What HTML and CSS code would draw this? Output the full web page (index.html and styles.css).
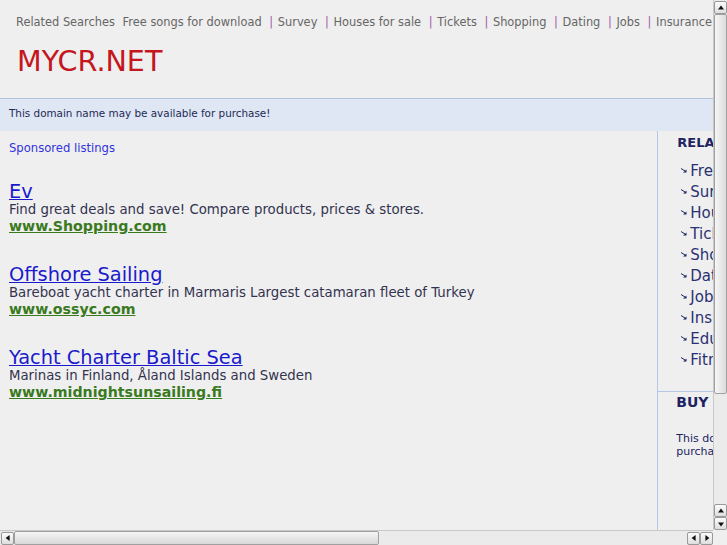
FILE: index.html
```html
<!DOCTYPE html>
<html>
<head>
<meta charset="utf-8">
<title>mycr.net</title>
<link rel="stylesheet" href="styles.css">
</head>
<body>
<div class="page">
  <div class="topnav">
    <span class="nav-label">Related Searches</span>
    <a href="#">Free songs for download</a> <span class="sep">|</span>
    <a href="#">Survey</a> <span class="sep">|</span>
    <a href="#">Houses for sale</a> <span class="sep">|</span>
    <a href="#">Tickets</a> <span class="sep">|</span>
    <a href="#">Shopping</a> <span class="sep">|</span>
    <a href="#">Dating</a> <span class="sep">|</span>
    <a href="#">Jobs</a> <span class="sep">|</span>
    <a href="#">Insurance</a> <span class="sep">|</span>
    <a href="#">Education</a> <span class="sep">|</span>
    <a href="#">Fitness</a>
  </div>
  <div class="logo">MYCR.NET</div>
  <div class="banner">This domain name may be available for purchase!</div>
  <div class="main">
    <div class="left">
      <div class="sponsored">Sponsored listings</div>
      <div class="ad">
        <a class="ad-title" href="#">Ev</a>
        <div class="ad-desc">Find great deals and save! Compare products, prices &amp; stores.</div>
        <a class="ad-url" href="#">www.Shopping.com</a>
      </div>
      <div class="ad">
        <a class="ad-title" href="#">Offshore Sailing</a>
        <div class="ad-desc">Bareboat yacht charter in Marmaris Largest catamaran fleet of Turkey</div>
        <a class="ad-url" href="#">www.ossyc.com</a>
      </div>
      <div class="ad">
        <a class="ad-title" href="#">Yacht Charter Baltic Sea</a>
        <div class="ad-desc">Marinas in Finland, Åland Islands and Sweden</div>
        <a class="ad-url" href="#">www.midnightsunsailing.fi</a>
      </div>
    </div>
    <div class="right">
      <div class="related">
        <div class="side-title">RELATED SEARCHES</div>
        <ul class="rel-list">
          <li><svg class="arr" width="6" height="5" viewBox="0 0 6 5"><path d="M0 0.5 L4 3" stroke="#1c2462" stroke-width="1"/><path d="M5.5 4.5 L5.5 1.5 L2 4.5 Z" fill="#1c2462"/></svg><a href="#">Free songs for download</a></li>
          <li><svg class="arr" width="6" height="5" viewBox="0 0 6 5"><path d="M0 0.5 L4 3" stroke="#1c2462" stroke-width="1"/><path d="M5.5 4.5 L5.5 1.5 L2 4.5 Z" fill="#1c2462"/></svg><a href="#">Survey</a></li>
          <li><svg class="arr" width="6" height="5" viewBox="0 0 6 5"><path d="M0 0.5 L4 3" stroke="#1c2462" stroke-width="1"/><path d="M5.5 4.5 L5.5 1.5 L2 4.5 Z" fill="#1c2462"/></svg><a href="#">Houses for sale</a></li>
          <li><svg class="arr" width="6" height="5" viewBox="0 0 6 5"><path d="M0 0.5 L4 3" stroke="#1c2462" stroke-width="1"/><path d="M5.5 4.5 L5.5 1.5 L2 4.5 Z" fill="#1c2462"/></svg><a href="#">Tickets</a></li>
          <li><svg class="arr" width="6" height="5" viewBox="0 0 6 5"><path d="M0 0.5 L4 3" stroke="#1c2462" stroke-width="1"/><path d="M5.5 4.5 L5.5 1.5 L2 4.5 Z" fill="#1c2462"/></svg><a href="#">Shopping</a></li>
          <li><svg class="arr" width="6" height="5" viewBox="0 0 6 5"><path d="M0 0.5 L4 3" stroke="#1c2462" stroke-width="1"/><path d="M5.5 4.5 L5.5 1.5 L2 4.5 Z" fill="#1c2462"/></svg><a href="#">Dating</a></li>
          <li><svg class="arr" width="6" height="5" viewBox="0 0 6 5"><path d="M0 0.5 L4 3" stroke="#1c2462" stroke-width="1"/><path d="M5.5 4.5 L5.5 1.5 L2 4.5 Z" fill="#1c2462"/></svg><a href="#">Jobs</a></li>
          <li><svg class="arr" width="6" height="5" viewBox="0 0 6 5"><path d="M0 0.5 L4 3" stroke="#1c2462" stroke-width="1"/><path d="M5.5 4.5 L5.5 1.5 L2 4.5 Z" fill="#1c2462"/></svg><a href="#">Insurance</a></li>
          <li><svg class="arr" width="6" height="5" viewBox="0 0 6 5"><path d="M0 0.5 L4 3" stroke="#1c2462" stroke-width="1"/><path d="M5.5 4.5 L5.5 1.5 L2 4.5 Z" fill="#1c2462"/></svg><a href="#">Education</a></li>
          <li><svg class="arr" width="6" height="5" viewBox="0 0 6 5"><path d="M0 0.5 L4 3" stroke="#1c2462" stroke-width="1"/><path d="M5.5 4.5 L5.5 1.5 L2 4.5 Z" fill="#1c2462"/></svg><a href="#">Fitness</a></li>
        </ul>
      </div>
      <div class="buy">
        <div class="side-title">BUY THIS DOMAIN</div>
        <p class="buy-text">This domain name may be available for purchase. Click here to inquire.</p>
      </div>
    </div>
  </div>
</div>
<div class="vscroll">
  <div class="sb-btn sb-up"></div>
  <div class="vtrack"><div class="vthumb"><span class="grip"></span></div></div>
  <div class="sb-btn sb-up"></div>
  <div class="sb-btn sb-down"></div>
</div>
<div class="hscroll">
  <div class="sb-btn sb-left"></div>
  <div class="htrack"><div class="hthumb"><span class="grip hgrip"></span></div></div>
  <div class="sb-btn sb-left"></div>
  <div class="sb-btn sb-right"></div>
</div>
<div class="corner"></div>
</body>
</html>
```
FILE: styles.css
```css
html, body {
  margin: 0;
  padding: 0;
  overflow: hidden;
  background: #efefef;
}
body {
  font-family: "DejaVu Sans", Verdana, sans-serif;
  color: #333;
}
.page {
  width: 936px;
  height: 680px;
  background: #efefef;
}
.topnav {
  padding: 15px 0 0 16px;
  height: 15px;
  font-size: 11.4px;
  line-height: 14px;
  color: #666;
  white-space: nowrap;
}
.topnav a {
  color: #666;
  text-decoration: none;
}
.nav-label { margin-right: 4px; }
.sep {
  display: inline-block;
  color: #a05aa8;
  margin: 0 1px 0 4px;
}
.logo {
  padding: 14px 0 0 17px;
  height: 68px;
  box-sizing: border-box;
  font-size: 28.6px;
  color: #c4161c;
  line-height: 34px;
}
.banner {
  border-top: 1px solid #b3c2dc;
  background: #dfe6f4;
  height: 33px;
  box-sizing: border-box;
  padding: 8px 0 0 9px;
  font-size: 10.4px;
  line-height: 13px;
  color: #222a55;
}
.main {
  display: flex;
}
.left {
  width: 658px;
  padding: 10px 0 0 9px;
  box-sizing: border-box;
}
.sponsored {
  font-size: 11.6px;
  line-height: 14px;
  color: #3333dd;
  margin-bottom: 27px;
}
.ad {
  display: flex;
  flex-direction: column;
  align-items: flex-start;
  margin-bottom: 30px;
}
.ad-title {
  font-size: 19.4px;
  color: #1a1acc;
  line-height: 19px;
}
.ad-desc {
  font-size: 13.3px;
  color: #33334f;
  line-height: 17px;
}
.ad-url {
  font-size: 14.2px;
  font-weight: bold;
  color: #3a7a1e;
  line-height: 17px;
}
.right {
  width: 278px;
  border-left: 1px solid #b6c6e4;
  min-height: 549px;
}
.related {
  padding: 4px 0 20px 19px;
  border-bottom: 1px solid #b6c6e4;
}
.side-title {
  font-size: 13px;
  font-weight: bold;
  color: #1c2462;
  white-space: nowrap;
}
.rel-list {
  list-style: none;
  margin: 11px 0 0 0;
  padding: 0;
}
.rel-list li {
  height: 21px;
  line-height: 21px;
  padding-left: 4px;
  font-size: 15px;
  white-space: nowrap;
  display: flex;
  align-items: center;
}
.arr {
  display: block;
  margin-right: 3px;
  margin-top: -2px;
}
.rel-list a {
  color: #2a3172;
  text-decoration: none;
}
.buy {
  padding: 2px 0 0 18px;
}
.buy .side-title { font-size: 14px; }
.buy-text {
  margin: 22px 0 0;
  font-size: 11px;
  line-height: 13px;
  color: #1c2462;
  width: 230px;
}

/* fake window scrollbars */
.vscroll {
  position: fixed;
  top: 0;
  right: 0;
  width: 14px;
  height: 530px;
  display: flex;
  flex-direction: column;
  background: #e9e9e9;
  border-left: 1px solid #c8c8c8;
  box-sizing: border-box;
  padding: 1px 0 0 0;
}
.hscroll {
  position: fixed;
  left: 0;
  bottom: 0;
  width: 713px;
  height: 15px;
  display: flex;
  align-items: center;
  background: #e9e9e9;
  border-top: 1px solid #c8c8c8;
  box-sizing: border-box;
  padding-left: 1px;
}
.corner {
  position: fixed;
  right: 0;
  bottom: 0;
  width: 14px;
  height: 15px;
  background: #efefef;
}
.sb-btn {
  flex: 0 0 13px;
  width: 13px;
  height: 13px;
  box-sizing: border-box;
  border: 1px solid #999;
  border-radius: 2px;
  background: linear-gradient(#fbfbfb, #dedede);
  position: relative;
}
.sb-btn::after {
  content: "";
  position: absolute;
  left: 50%;
  top: 50%;
  width: 0;
  height: 0;
  border: 3px solid transparent;
}
.sb-up::after { border-bottom: 4px solid #111; border-top: 0; transform: translate(-50%, -60%); }
.sb-down::after { border-top: 4px solid #111; border-bottom: 0; transform: translate(-50%, -40%); }
.sb-left::after { border-right: 4px solid #111; border-left: 0; transform: translate(-60%, -50%); }
.sb-right::after { border-left: 4px solid #111; border-right: 0; transform: translate(-40%, -50%); }
.vtrack {
  flex: 1;
  background: #ebebeb;
}
.vthumb {
  height: 380px;
  box-sizing: border-box;
  border: 1px solid #a0a0a0;
  border-radius: 2px;
  background: linear-gradient(90deg, #f6f6f6, #dcdcdc);
  display: flex;
  align-items: center;
  justify-content: center;
}
.htrack {
  flex: 1;
  height: 14px;
  background: #ebebeb;
  display: flex;
}
.hthumb {
  width: 365px;
  height: 14px;
  box-sizing: border-box;
  border: 1px solid #a0a0a0;
  border-radius: 2px;
  background: linear-gradient(#f6f6f6, #d8d8d8);
  display: flex;
  align-items: center;
  justify-content: center;
}
.grip {
  width: 8px;
  height: 16px;
  background-image: radial-gradient(#a8a8a8 40%, transparent 45%);
  background-size: 2px 2px;
}
.hgrip { width: 16px; height: 8px; }
```
